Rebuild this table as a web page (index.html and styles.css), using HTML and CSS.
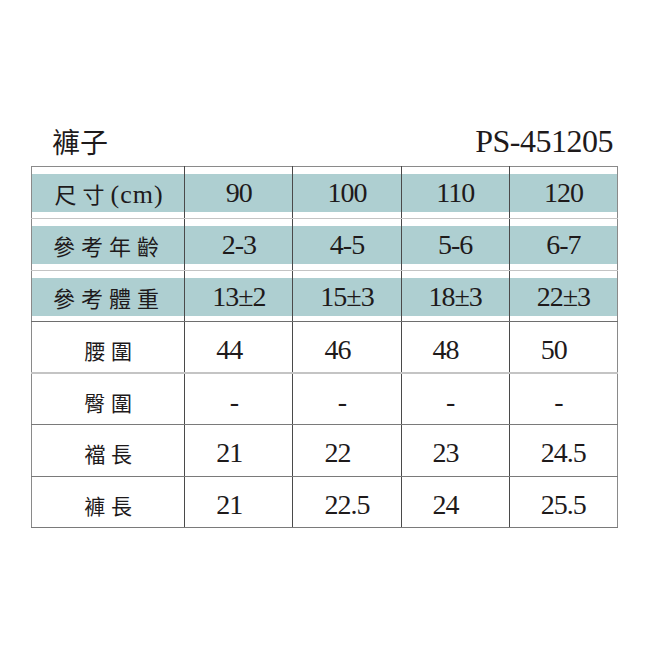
FILE: index.html
```html
<!DOCTYPE html>
<html lang="zh-Hant">
<head>
<meta charset="utf-8">
<title>褲子 PS-451205</title>
<link rel="stylesheet" href="styles.css">
</head>
<body>
<div class="page">
  <div class="title-row">
    <div class="title">褲子</div>
    <div class="code">PS-451205</div>
  </div>
  <table class="size-table">
    <colgroup>
      <col class="c-label">
      <col class="c-val">
      <col class="c-val">
      <col class="c-val">
      <col class="c-val">
    </colgroup>
    <tr class="head">
      <td><div class="band label">尺寸<span class="unit">(cm)</span></div></td>
      <td><div class="band">90</div></td>
      <td><div class="band">100</div></td>
      <td><div class="band">110</div></td>
      <td><div class="band">120</div></td>
    </tr>
    <tr class="head">
      <td><div class="band label">參考年齡</div></td>
      <td><div class="band">2-3</div></td>
      <td><div class="band">4-5</div></td>
      <td><div class="band">5-6</div></td>
      <td><div class="band">6-7</div></td>
    </tr>
    <tr class="head last-head">
      <td><div class="band label">參考體重</div></td>
      <td><div class="band">13±2</div></td>
      <td><div class="band">15±3</div></td>
      <td><div class="band">18±3</div></td>
      <td><div class="band">22±3</div></td>
    </tr>
    <tr class="body light">
      <td class="name">腰圍</td>
      <td class="num">44</td>
      <td class="num">46</td>
      <td class="num">48</td>
      <td class="num">50</td>
    </tr>
    <tr class="body">
      <td class="name">臀圍</td>
      <td class="dash">-</td>
      <td class="dash">-</td>
      <td class="dash">-</td>
      <td class="dash">-</td>
    </tr>
    <tr class="body">
      <td class="name">襠長</td>
      <td class="num">21</td>
      <td class="num">22</td>
      <td class="num">23</td>
      <td class="num">24.5</td>
    </tr>
    <tr class="body">
      <td class="name">褲長</td>
      <td class="num">21</td>
      <td class="num">22.5</td>
      <td class="num">24</td>
      <td class="num">25.5</td>
    </tr>
  </table>
</div>
</body>
</html>
```

FILE: styles.css
```css
html, body {
  margin: 0;
  padding: 0;
  background: #ffffff;
}

.page {
  padding: 116px 0 0 31px;
  color: #1e1a1b;
  font-family: "Liberation Serif", "DejaVu Serif", "Noto Sans CJK TC", serif;
}

.title-row {
  width: 587px;
  height: 50px;
  display: flex;
  justify-content: space-between;
  align-items: center;
  box-sizing: border-box;
  padding: 0 5px 0 21px;
}

.title {
  font-family: "Noto Sans CJK TC", sans-serif;
  font-weight: 400;
  font-size: 28px;
  line-height: 34px;
}

.code {
  font-family: "Liberation Serif", "DejaVu Serif", serif;
  font-size: 32px;
  letter-spacing: -0.5px;
  line-height: 34px;
}

.size-table {
  width: 587px;
  border-collapse: collapse;
  table-layout: fixed;
  border: 1px solid #8a8a8a;
}

.c-label { width: 153px; }
.c-val { width: 108px; }

.size-table td {
  padding: 0;
  border-left: 1px solid #4a4a4a;
  border-right: 1px solid #4a4a4a;
}

.size-table td:first-child { border-left: 1px solid #8a8a8a; }
.size-table td:last-child { border-right: 1px solid #8a8a8a; }

.head td {
  padding: 7px 0 6px;
  border-bottom: 1px solid #c4c4c4;
}

.head.last-head td {
  padding-bottom: 5px;
  border-bottom: 1px solid #6e6e6e;
}

.band {
  height: 38px;
  line-height: 38px;
  background: #aecfd1;
  text-align: center;
  font-size: 28px;
  letter-spacing: -1px;
  font-family: "Liberation Serif", "DejaVu Serif", serif;
}

.band.label {
  font-family: "Noto Sans CJK TC", sans-serif;
  font-weight: 400;
  font-size: 22px;
  letter-spacing: 6px;
  padding-left: 2px;
}

.unit {
  font-family: "Liberation Serif", "DejaVu Serif", serif;
  font-size: 26px;
  letter-spacing: 1px;
}

.body td {
  height: 51.6px;
  border-bottom: 1px solid #7a7a7a;
  font-size: 28px;
  letter-spacing: -1px;
  line-height: 30px;
  padding-top: 6px;
  box-sizing: border-box;
  vertical-align: middle;
}

.body.light td {
  border-bottom: 2px solid #c4c4c4;
}

.body .name {
  text-align: center;
  font-family: "Noto Sans CJK TC", sans-serif;
  font-weight: 400;
  font-size: 21px;
  letter-spacing: 6px;
  padding-left: 6px;
}

.body .num {
  text-align: left;
  padding-left: 31px;
}

.body .dash {
  text-align: center;
  padding-right: 10px;
}
```
